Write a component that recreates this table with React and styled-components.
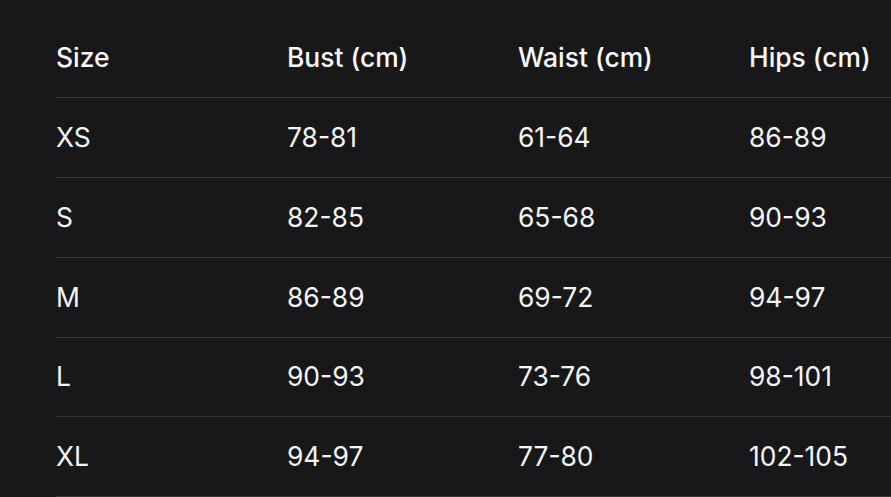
import React from 'react';
import styled, { createGlobalStyle } from 'styled-components';

const GlobalStyle = createGlobalStyle`
  html, body {
    margin: 0;
    padding: 0;
    background: #18181b;
    overflow: hidden;
  }
  body {
    font-family: Inter, "Noto Sans", sans-serif;
  }
`;

const Page = styled.div`
  padding: 18.4px 0 0 56px;
  width: 100%;
  box-sizing: border-box;
`;

const Table = styled.div`
  display: grid;
  grid-template-columns: repeat(4, 231px);
  width: 924px;
`;

const Cell = styled.div`
  display: flex;
  align-items: center;
  box-sizing: content-box;
  height: 77.8px;
  padding-bottom: 1px;
  border-bottom: 1px solid #3a3a3d;
  font-size: 26.4px;
  font-weight: ${(p) => (p.$head ? 500 : 400)};
  color: ${(p) => (p.$head ? '#fafafa' : '#f4f4f5')};
  white-space: nowrap;
`;

const headers = ['Size', 'Bust (cm)', 'Waist (cm)', 'Hips (cm)'];

const rows = [
  ['XS', '78-81', '61-64', '86-89'],
  ['S', '82-85', '65-68', '90-93'],
  ['M', '86-89', '69-72', '94-97'],
  ['L', '90-93', '73-76', '98-101'],
  ['XL', '94-97', '77-80', '102-105'],
];

export default function App() {
  return (
    <>
      <GlobalStyle />
      <Page>
        <Table>
          {headers.map((h) => (
            <Cell key={h} $head>{h}</Cell>
          ))}
          {rows.map((row) =>
            row.map((v, i) => <Cell key={row[0] + i}>{v}</Cell>)
          )}
        </Table>
      </Page>
    </>
  );
}
